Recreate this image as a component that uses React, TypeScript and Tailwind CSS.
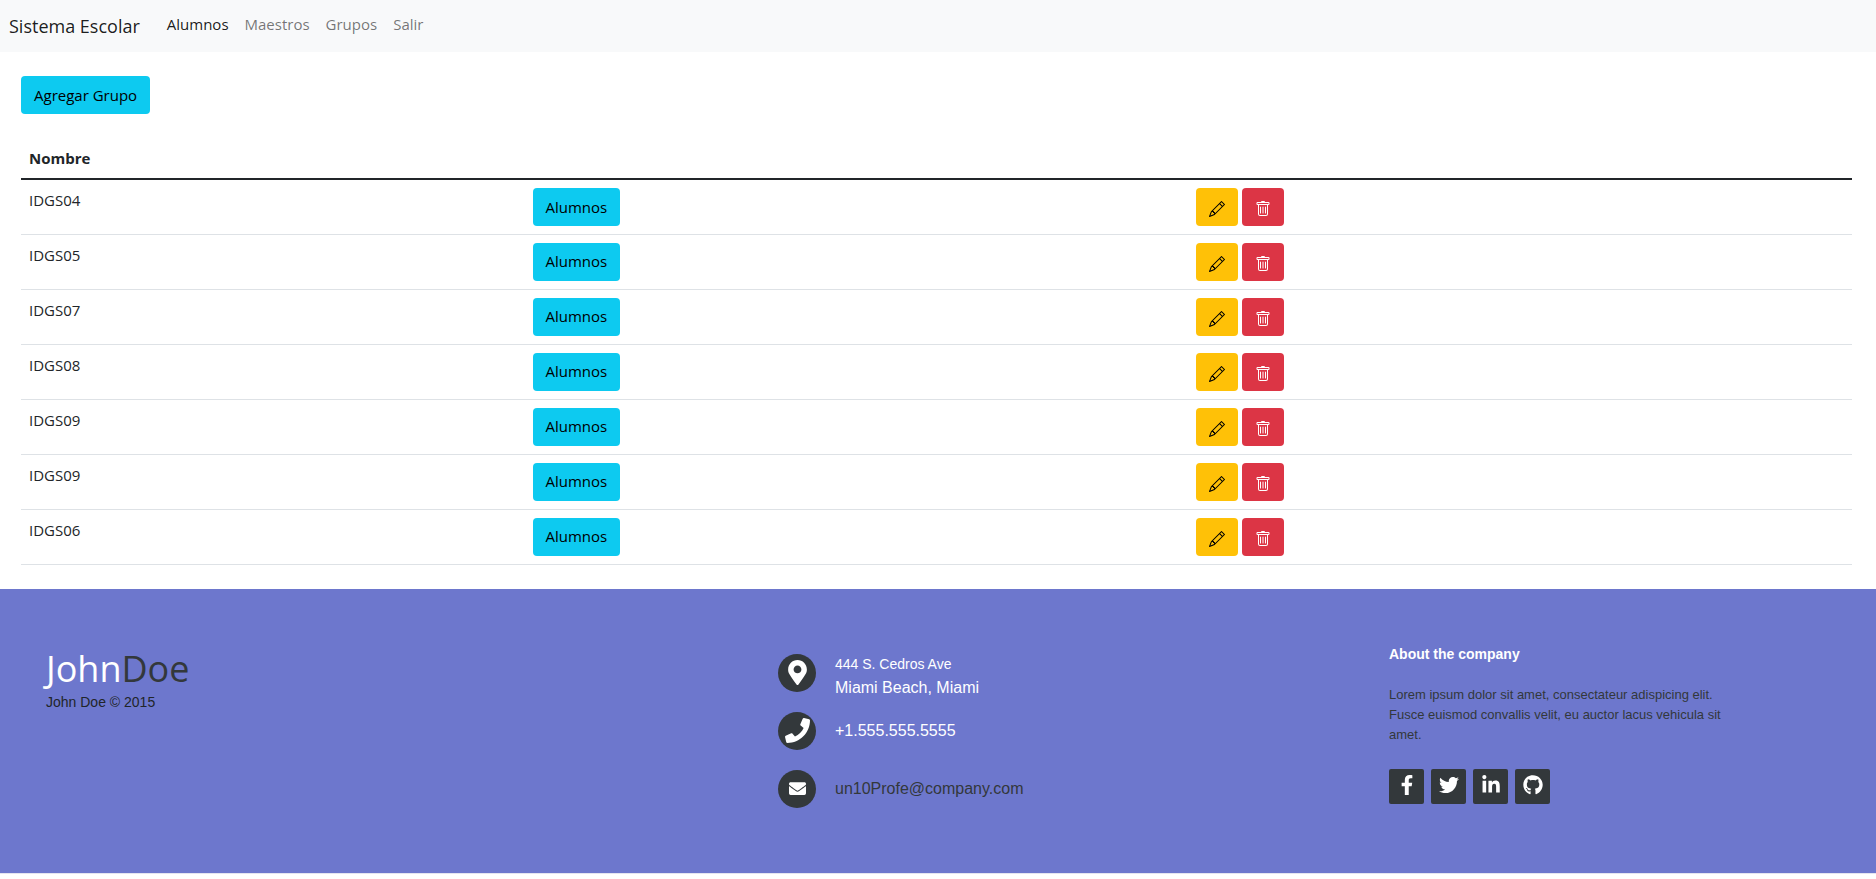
import type { ReactNode } from "react";
import { BsPencil, BsTrash } from "react-icons/bs";
import {
  FaEnvelope,
  FaFacebookF,
  FaGithub,
  FaLinkedinIn,
  FaMapMarkerAlt,
  FaPhone,
  FaTwitter,
} from "react-icons/fa";

const navItems = ["Alumnos", "Maestros", "Grupos", "Salir"];

const groups = [
  { id: 1, name: "IDGS04" },
  { id: 2, name: "IDGS05" },
  { id: 3, name: "IDGS07" },
  { id: 4, name: "IDGS08" },
  { id: 5, name: "IDGS09" },
  { id: 6, name: "IDGS09" },
  { id: 7, name: "IDGS06" },
];

const socials = [
  { label: "Facebook", icon: <FaFacebookF /> },
  { label: "Twitter", icon: <FaTwitter /> },
  { label: "LinkedIn", icon: <FaLinkedinIn /> },
  { label: "GitHub", icon: <FaGithub /> },
];

function Navbar() {
  return (
    <nav className="flex h-13 items-center bg-[#f8f9fa] px-[9px]">
      <a href="#" className="mr-[19px] text-[18px] leading-[30px] text-black/90">
        Sistema Escolar
      </a>
      <ul className="flex pb-1">
        {navItems.map((item, i) => (
          <li key={item}>
            <a href="#" className={`block px-2 leading-6 ${i === 0 ? "text-black/90" : "text-black/55"}`}>
              {item}
            </a>
          </li>
        ))}
      </ul>
    </nav>
  );
}

function InfoButton({ children }: { children: ReactNode }) {
  return (
    <button type="button" className="h-[38px] rounded bg-[#0dcaf0] px-[13px] text-black">
      {children}
    </button>
  );
}

function GroupTable() {
  return (
    <table className="mt-6 w-full table-fixed border-collapse text-left">
      <colgroup>
        <col className="w-[27.5%]" />
        <col className="w-[36.25%]" />
        <col className="w-[36.25%]" />
      </colgroup>
      <thead>
        <tr className="border-b-2 border-[#212529]">
          <th className="h-[41px] px-2 font-bold">Nombre</th>
          <th />
          <th />
        </tr>
      </thead>
      <tbody>
        {groups.map((g) => (
          <tr key={g.id} className="h-[55px] border-b border-[#dee2e6] align-top">
            <td className="p-2 leading-6">{g.name}</td>
            <td className="px-2 pt-2">
              <InfoButton>Alumnos</InfoButton>
            </td>
            <td className="px-2 pt-2">
              <div className="flex gap-1">
                <button
                  type="button"
                  aria-label="Editar"
                  className="flex h-[38px] w-[42px] items-center justify-center rounded bg-[#ffc107] pt-1 text-base text-black"
                >
                  <BsPencil />
                </button>
                <button
                  type="button"
                  aria-label="Eliminar"
                  className="flex h-[38px] w-[42px] items-center justify-center rounded bg-[#dc3545] pt-1 text-base text-white"
                >
                  <BsTrash />
                </button>
              </div>
            </td>
          </tr>
        ))}
      </tbody>
    </table>
  );
}

function Contact({ icon, children }: { icon: ReactNode; children: ReactNode }) {
  return (
    <li className="flex h-[38px] items-center gap-[19px]">
      <span className="flex size-[38px] shrink-0 items-center justify-center rounded-full bg-[#33383b] text-white">
        {icon}
      </span>
      {children}
    </li>
  );
}

function Footer() {
  return (
    <footer className="grid grid-cols-[732fr_611fr_441fr] border-b border-[#e4e5f0] bg-[#6d77cd] px-[46px] pt-[55px] pb-[65px] font-['Liberation_Sans',Arial,sans-serif]">
      <div className="pt-1">
        <h3 className="font-['Open_Sans','Noto_Sans',sans-serif] text-[36px] leading-[42px] text-white">
          John<span className="text-[#33383b]">Doe</span>
        </h3>
        <p className="text-sm leading-6 text-[#212529]">John Doe © 2015</p>
      </div>
      <ul className="flex flex-col gap-5 pt-[10px] text-base text-white">
        <Contact icon={<FaMapMarkerAlt className="size-[25px]" />}>
          <p className="pt-1.5 leading-6">
            <span className="text-sm leading-6">444 S. Cedros Ave</span>
            <br />
            Miami Beach, Miami
          </p>
        </Contact>
        <Contact icon={<FaPhone className="size-[25px]" />}>
          <p>+1.555.555.5555</p>
        </Contact>
        <Contact icon={<FaEnvelope className="size-[17px]" />}>
          <a href="mailto:un10Profe@company.com" className="text-[#33383b]">
            un10Profe@company.com
          </a>
        </Contact>
      </ul>
      <div>
        <h4 className="text-sm leading-5 font-bold text-white">About the company</h4>
        <p className="mt-[21px] max-w-[350px] text-[13px] leading-5 text-[#33383b]">
          Lorem ipsum dolor sit amet, consectateur adispicing elit. Fusce euismod convallis velit, eu auctor lacus
          vehicula sit amet.
        </p>
        <div className="mt-6 flex gap-[7px]">
          {socials.map((s) => (
            <a
              key={s.label}
              href="#"
              aria-label={s.label}
              className="flex size-[35px] items-center justify-center rounded-xs bg-[#33383b] pb-0.5 text-xl text-white"
            >
              {s.icon}
            </a>
          ))}
        </div>
      </div>
    </footer>
  );
}

export default function App() {
  return (
    <div className="bg-white font-['Open_Sans','Noto_Sans',sans-serif] text-[15px] text-[#212529]">
      <Navbar />
      <main className="py-6 pr-6 pl-[21px]">
        <InfoButton>Agregar Grupo</InfoButton>
        <GroupTable />
      </main>
      <Footer />
    </div>
  );
}
